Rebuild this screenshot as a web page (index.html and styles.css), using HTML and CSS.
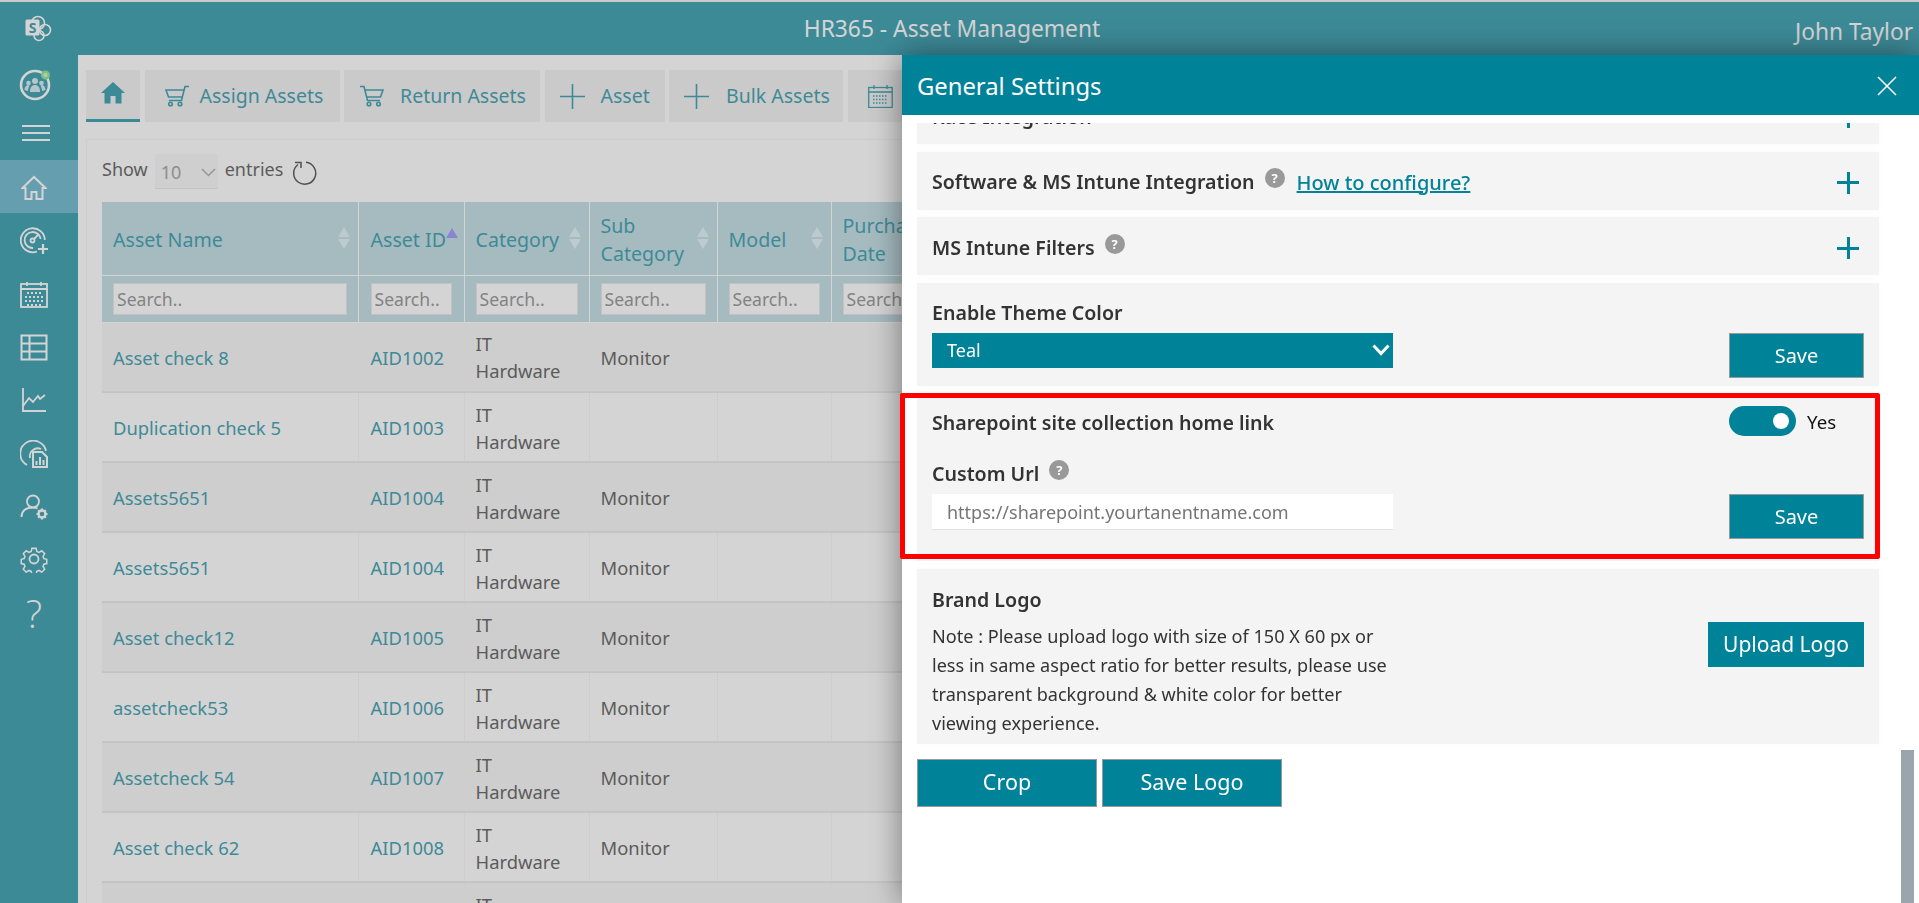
FILE: index.html
```html
<!DOCTYPE html>
<html lang="en">
<head>
  <meta charset="UTF-8" />
  <title>HR365 - Asset Management</title>
  <link rel="stylesheet" href="styles.css">
</head>
<body>
<div class="topline"></div>
<header class="topbar">
  <div class="brand">
    <svg width="28" height="28" viewBox="0 0 28 28" fill="none" stroke="#fff" stroke-width="1.6">
      <circle cx="13" cy="8" r="6.5"/>
      <circle cx="20" cy="15" r="5.5"/>
      <circle cx="14" cy="20.5" r="5"/>
      <rect x="0.5" y="4.5" width="14" height="16" rx="1.5" fill="#fff" stroke="none"/>
      <text x="7.5" y="17.5" class="brand-s">S</text>
    </svg>
  </div>
  <div class="app-title">HR365 - Asset Management</div>
  <div class="user-name">John Taylor</div>
</header>

<div class="layout">
  <aside class="sidebar">
    <div class="profile">
      <svg width="36" height="36" viewBox="0 0 36 36" fill="none">
        <circle cx="17" cy="19" r="14" stroke="#fff" stroke-width="2.6"/>
        <g fill="#fff" opacity="0.8">
          <circle cx="17" cy="15" r="3"/>
          <circle cx="10.5" cy="17" r="2.3"/>
          <circle cx="23.5" cy="17" r="2.3"/>
          <path d="M12 26c0-5 2-7 5-7s5 2 5 7z"/>
          <path d="M6.500 24c0-3 1.500-5 4-5l1 1c-1 1-1.500 3-1.500 5z"/>
          <path d="M27.500 24c0-3-1.500-5-4-5l-1 1c1 1 1.500 3 1.500 5z"/>
        </g>
        <circle cx="27.500" cy="9" r="3.300" fill="#c9f2c9" stroke="#6fdc6f" stroke-width="2.400"/>
      </svg>
    </div>
    <div class="hamburger"><i></i><i></i><i></i></div>
    <nav class="nav">
      <a class="nav-item active">
        <svg width="26" height="26" viewBox="0 0 26 26" fill="none" stroke="#fff" stroke-width="2">
          <path d="M1.500 13 13 2l11.500 11h-3v11h-6v-7h-5v7h-6V13z"/>
        </svg>
      </a>
      <a class="nav-item">
        <svg width="28" height="28" viewBox="0 0 28 28" fill="none" stroke="#fff" stroke-width="1.800">
          <path d="M17 24.500A12 12 0 1 1 24.800 13"/>
          <path d="M13 21A8 8 0 1 1 20.500 12"/>
          <circle cx="12.500" cy="13.500" r="2"/>
          <path d="M14 12l5-5"/>
          <path d="M23 17v10M18 22h10" stroke-width="2.200"/>
        </svg>
      </a>
      <a class="nav-item">
        <svg width="28" height="28" viewBox="0 0 28 28" fill="none" stroke="#fff" stroke-width="1.800">
          <rect x="1" y="3" width="26" height="23"/>
          <path d="M1 8h26M7 1v4M21 1v4"/>
          <path d="M7 12h14M5 16h18M5 20h18M7 24h14" stroke-width="2" stroke-dasharray="2 2"/>
        </svg>
      </a>
      <a class="nav-item">
        <svg width="28" height="28" viewBox="0 0 28 28" fill="none" stroke="#fff" stroke-width="2">
          <rect x="1.500" y="1.500" width="25" height="24"/>
          <path d="M1.500 9.500h25M1.500 17.500h25M9.500 1.500v24"/>
        </svg>
      </a>
      <a class="nav-item">
        <svg width="28" height="28" viewBox="0 0 28 28" fill="none" stroke="#fff" stroke-width="1.800">
          <path d="M3 1v23h23" />
          <path d="M3 19l6-8 4 4 5-6 2 3 5-4"/>
        </svg>
      </a>
      <a class="nav-item">
        <svg width="28" height="28" viewBox="0 0 28 28" fill="none" stroke="#fff" stroke-width="1.800">
          <path d="M7 25A13 13 0 1 1 26 11"/>
          <path d="M10 18A8 8 0 0 1 21 9"/>
          <path d="M13 12h9l5 5v10H13z" stroke-width="2"/>
          <path d="M16.500 25v-4M20 25v-8M23.500 25v-5" stroke-width="2"/>
        </svg>
      </a>
      <a class="nav-item">
        <svg width="30" height="28" viewBox="0 0 30 28" fill="none" stroke="#fff" stroke-width="1.800">
          <circle cx="14" cy="7.500" r="6"/>
          <path d="M2.500 23c0-6 4-9.500 11.500-9.500 2 0 3 .3 4.500 1"/>
          <circle cx="23" cy="20" r="3.500" stroke-width="2.400"/>
          <path d="M23 14.500v2.500M23 23v2.500M17.500 20H20M26 20h2.500M19.200 16.200l1.400 1.400M25.400 22.400l1.400 1.400M19.200 23.800l1.400-1.400M25.400 17.600l1.400-1.400" stroke-width="2.200"/>
        </svg>
      </a>
      <a class="nav-item">
        <svg width="28" height="28" viewBox="0 0 28 28" fill="none" stroke="#fff" stroke-width="1.800">
          <circle cx="14" cy="14" r="4.500"/>
          <path d="M11.500 1.500h5l.8 3.700 2.600 1.100 3.200-2 3.500 3.500-2 3.200 1.100 2.600 3.300.8v5l-3.300.8-1.100 2.600 2 3.200-3.500 3.500-3.200-2-2.600 1.100-.8 3.300h-5l-.8-3.300-2.600-1.100-3.200 2-3.500-3.500 2-3.200-1.100-2.600-3.300-.8v-5l3.300-.8 1.100-2.600-2-3.200 3.500-3.500 3.200 2 2.600-1.100z" transform="translate(2.100 2.100) scale(.85)"/>
        </svg>
      </a>
      <a class="nav-item"><span class="help-glyph">?</span></a>
    </nav>
  </aside>

  <main class="content">
    <div class="tabs">
      <a class="tab tab-home">
        <svg width="24" height="22" viewBox="0 0 24 22" fill="currentColor">
          <path d="M12 0 0 11h3.500v10.500h6V14h5v7.500h6V11H24z"/>
        </svg>
      </a>
      <a class="tab tab-assign">
        <svg class="flip" width="25" height="22" viewBox="0 0 25 22" fill="none" stroke="currentColor" stroke-width="1.600">
          <path d="M1 1.500h4l3.500 14h12.500M6 5h18l-2.500 7H8"/>
          <circle cx="10" cy="19" r="1.800"/><circle cx="19.500" cy="19" r="1.800"/>
        </svg>
        <span>Assign Assets</span>
      </a>
      <a class="tab tab-return">
        <svg width="25" height="22" viewBox="0 0 25 22" fill="none" stroke="currentColor" stroke-width="1.600">
          <path d="M1 1.500h4l3.500 14h12.500M6 5h18l-2.500 7H8"/>
          <circle cx="10" cy="19" r="1.800"/><circle cx="19.500" cy="19" r="1.800"/>
        </svg>
        <span>Return Assets</span>
      </a>
      <a class="tab tab-asset">
        <svg width="25" height="25" viewBox="0 0 25 25" stroke="currentColor" stroke-width="1.600"><path d="M12.500 0v25M0 12.500h25"/></svg>
        <span>Asset</span>
      </a>
      <a class="tab tab-bulk">
        <svg width="25" height="25" viewBox="0 0 25 25" stroke="currentColor" stroke-width="1.600"><path d="M12.500 0v25M0 12.500h25"/></svg>
        <span>Bulk Assets</span>
      </a>
      <a class="tab tab-cal">
        <svg width="25" height="23" viewBox="0 0 25 23" fill="none" stroke="currentColor" stroke-width="1.300">
          <rect x=".7" y="2.500" width="23.500" height="20"/>
          <path d="M.7 7h23.500M6 0v4M19 0v4"/>
          <path d="M5 11h15M5 14.500h15M5 18h15" stroke-width="1.600" stroke-dasharray="1.500 1.500"/>
        </svg>
      </a>
    </div>

    <section class="card">
      <div class="length-row">
        <span class="length-text">Show</span>
        <div class="length-select">
          <span>10</span>
          <svg width="15" height="9" viewBox="0 0 15 9" fill="none" stroke="#999" stroke-width="1.500"><path d="M1 1l6.500 6.500L14 1"/></svg>
        </div>
        <span class="length-text">entries</span>
        <svg class="refresh" width="26" height="26" viewBox="0 0 26 26" fill="none" stroke="#222" stroke-width="1.500">
          <path d="M7 4.500A11 11 0 1 0 15 2.300"/>
          <path d="M4 2.500h6V8"/>
        </svg>
      </div>

      <table class="assets">
        <colgroup>
          <col class="c-name"><col class="c-id"><col class="c-cat"><col class="c-sub"><col class="c-model"><col class="c-date">
        </colgroup>
        <thead>
          <tr class="head-row">
            <th><div class="th-in"><span>Asset Name</span><i class="sort"></i></div></th>
            <th class="th-id"><div class="th-in"><span>Asset ID</span><i class="sort-up"></i></div></th>
            <th><div class="th-in"><span>Category</span><i class="sort"></i></div></th>
            <th><div class="th-in"><span>Sub<br>Category</span><i class="sort"></i></div></th>
            <th><div class="th-in"><span>Model</span><i class="sort"></i></div></th>
            <th><div class="th-in"><span>Purchase<br>Date</span><i class="sort"></i></div></th>
          </tr>
          <tr class="filter-row">
            <th><input placeholder="Search.."></th>
            <th class="th-id"><input placeholder="Search.."></th>
            <th><input placeholder="Search.."></th>
            <th><input placeholder="Search.."></th>
            <th><input placeholder="Search.."></th>
            <th><input placeholder="Search.."></th>
          </tr>
        </thead>
        <tbody>
          <tr><td><a>Asset check 8</a></td><td class="td-id"><a>AID1002</a></td><td>IT<br>Hardware</td><td>Monitor</td><td></td><td></td></tr>
          <tr><td><a>Duplication check 5</a></td><td class="td-id"><a>AID1003</a></td><td>IT<br>Hardware</td><td></td><td></td><td></td></tr>
          <tr><td><a>Assets5651</a></td><td class="td-id"><a>AID1004</a></td><td>IT<br>Hardware</td><td>Monitor</td><td></td><td></td></tr>
          <tr><td><a>Assets5651</a></td><td class="td-id"><a>AID1004</a></td><td>IT<br>Hardware</td><td>Monitor</td><td></td><td></td></tr>
          <tr><td><a>Asset check12</a></td><td class="td-id"><a>AID1005</a></td><td>IT<br>Hardware</td><td>Monitor</td><td></td><td></td></tr>
          <tr><td><a>assetcheck53</a></td><td class="td-id"><a>AID1006</a></td><td>IT<br>Hardware</td><td>Monitor</td><td></td><td></td></tr>
          <tr><td><a>Assetcheck 54</a></td><td class="td-id"><a>AID1007</a></td><td>IT<br>Hardware</td><td>Monitor</td><td></td><td></td></tr>
          <tr><td><a>Asset check 62</a></td><td class="td-id"><a>AID1008</a></td><td>IT<br>Hardware</td><td>Monitor</td><td></td><td></td></tr>
          <tr><td></td><td></td><td>IT<br>Hardware</td><td></td><td></td><td></td></tr>
        </tbody>
      </table>
    </section>
  </main>
</div>

<div class="overlay"></div>

<aside class="panel">
  <div class="panel-head">
    <h2>General Settings</h2>
    <svg width="20" height="20" viewBox="0 0 20 20" stroke="#fff" stroke-width="1.600"><path d="M1 1l18 18M19 1L1 19"/></svg>
  </div>
  <div class="panel-body">
    <div class="panel-scroll">
      <div class="box box-row">
        <div class="box-title"><b>Kace Integration</b><i class="qmark">?</i></div>
        <span class="plus"></span>
      </div>
      <div class="box box-row">
        <div class="box-title"><b>Software &amp; MS Intune Integration</b><i class="qmark">?</i><a class="howto">How to configure?</a></div>
        <span class="plus"></span>
      </div>
      <div class="box box-row">
        <div class="box-title"><b>MS Intune Filters</b><i class="qmark">?</i></div>
        <span class="plus"></span>
      </div>
      <div class="box box-theme">
        <div class="field">
          <label>Enable Theme Color</label>
          <div class="theme-select">
            <span>Teal</span>
            <svg width="18" height="12" viewBox="0 0 18 12" fill="none" stroke="#fff" stroke-width="3"><path d="M1.500 1.500 9 9.500l7.500-8"/></svg>
          </div>
        </div>
        <button class="btn btn-save">Save</button>
      </div>
      <div class="box box-link">
        <div class="link-top">
          <label class="link-label">Sharepoint site collection home link</label>
          <div class="toggle-wrap"><span class="toggle"></span><span>Yes</span></div>
        </div>
        <div class="link-bottom">
          <div class="field">
            <label class="url-label">Custom Url<i class="qmark">?</i></label>
            <input class="url-input" placeholder="https://sharepoint.yourtanentname.com">
          </div>
          <button class="btn btn-save">Save</button>
        </div>
      </div>
      <div class="box box-logo">
        <div class="logo-text">
          <label>Brand Logo</label>
          <p>Note : Please upload logo with size of 150 X 60 px or<br>less in same aspect ratio for better results, please use<br>transparent background &amp; white color for better<br>viewing experience.</p>
        </div>
        <button class="btn btn-upload">Upload Logo</button>
      </div>
      <div class="logo-actions">
        <button class="btn btn-wide">Crop</button>
        <button class="btn btn-wide">Save Logo</button>
      </div>
    </div>
    <div class="scroll-thumb"></div>
  </div>
  <div class="callout"></div>
</aside>
</body>
</html>
```

FILE: styles.css
```css
/* Reset and base */
* {
  box-sizing: border-box;
}
html, body {
  height: 100%;
}
body {
  margin: 0;
  overflow: hidden;
  font-family: "Noto Sans", "Open Sans", sans-serif;
  font-size: 18px;
  background: #fff;
  color: #333;
}
a {
  color: #008299;
  text-decoration: none;
}
.overlay {
  position: fixed;
  inset: 0;
  background: rgba(150, 150, 150, 0.408);
}

/* Top bar */
.topline {
  height: 2px;
  background: #eee;
}
.topbar {
  display: grid;
  grid-template-columns: 1fr auto 1fr;
  align-items: center;
  height: 53px;
  padding-right: 6px;
  background: #008299;
  color: #fff;
}
.brand {
  display: flex;
  padding-left: 25px;
}
.brand-s {
  font-family: "Noto Sans", sans-serif;
  font-size: 14px;
  font-weight: 700;
  fill: #008299;
  stroke: none;
  text-anchor: middle;
}
.app-title {
  margin-right: 9px;
  font-size: 22.800px;
}
.user-name {
  justify-self: end;
  padding-top: 5px;
  font-size: 22.700px;
}

.layout {
  display: flex;
  height: calc(100% - 55px);
  overflow: hidden;
}

/* Sidebar */
.sidebar {
  flex: 0 0 78px;
  background: #008299;
}
.profile {
  display: flex;
  height: 60px;
  padding: 11px 0 0 18px;
}
.hamburger {
  display: flex;
  flex-direction: column;
  gap: 5px;
  height: 45px;
  padding: 10px 0 0 22px;
}
.hamburger i {
  display: block;
  width: 28px;
  height: 2px;
  background: #fff;
}
.nav-item {
  display: flex;
  align-items: center;
  justify-content: center;
  width: 68px;
  height: 53.250px;
  padding-top: 3px;
}
.nav-item:nth-last-child(-n+2) {
  padding-top: 0;
}
.nav-item.active {
  width: 78px;
  padding-right: 10px;
  background: #45a5bf;
}
.help-glyph {
  font-family: "Open Sans", sans-serif;
  font-size: 38px;
  font-weight: 300;
  color: #fff;
}

/* Main content */
.content {
  flex: 1;
  min-width: 0;
  padding: 15px 0 0 8px;
}
.tabs {
  display: flex;
  gap: 4.500px;
  height: 52px;
}
.tab {
  display: flex;
  align-items: center;
  background: #eee;
  font-size: 19.500px;
}
.tab span {
  padding-bottom: 2px;
}
.tab-home {
  justify-content: center;
  width: 54px;
  padding-bottom: 3px;
  border-bottom: 3px solid #008299;
}
.tab-assign {
  gap: 10px;
  width: 195px;
  padding-left: 20px;
}
.tab-return {
  gap: 16px;
  width: 196px;
  padding-left: 15px;
}
.tab-asset {
  gap: 16px;
  width: 120px;
  padding-left: 15px;
}
.tab-bulk {
  gap: 17px;
  width: 174px;
  padding-left: 15px;
}
.tab-cal {
  width: 130px;
  padding-left: 20px;
}
.flip {
  transform: scaleX(-1);
}

.card {
  margin-top: 17px;
  padding-left: 15px;
  border: 1px solid #f2f2f2;
  border-right: 0;
}
.length-row {
  display: flex;
  align-items: center;
  gap: 7px;
  height: 62px;
  color: #333;
}
.length-text {
  padding-bottom: 5px;
}
.length-select {
  display: flex;
  align-items: center;
  justify-content: space-between;
  width: 63px;
  height: 35px;
  padding: 3px 2px 0 6px;
  border-bottom: 1px solid #e4e4e4;
  background: #f6f6f6;
  color: #888;
}
.refresh {
  margin: 4px 0 0 1px;
}

/* Table */
.assets {
  width: 849px;
  border-collapse: collapse;
  table-layout: fixed;
  font-size: 18.400px;
}
.c-name { width: 256px; }
.c-id { width: 106px; }
.c-cat { width: 125px; }
.c-sub { width: 128px; }
.c-model { width: 114px; }
.c-date { width: 120px; }
.assets th {
  padding: 0 11px;
  border-right: 1px solid #fff;
  border-bottom: 1px solid #fff;
  background: #b0d5dd;
  color: #008299;
  font-size: 19.600px;
  font-weight: 400;
  text-align: left;
}
.assets th.th-id {
  padding: 0 12px;
}
.head-row {
  height: 73px;
}
.th-in {
  display: flex;
  align-items: center;
  justify-content: space-between;
  margin-right: -3px;
  line-height: 28px;
}
.th-in span {
  padding-top: 3px;
  white-space: nowrap;
}
.th-id .th-in {
  justify-content: flex-start;
}
.sort {
  display: flex;
  flex-direction: column;
  gap: 2px;
}
.sort::before, .sort::after {
  content: "";
  border-right: 6px solid transparent;
  border-left: 6px solid transparent;
}
.sort::before {
  border-bottom: 10px solid #d8eef5;
}
.sort::after {
  border-top: 10px solid #d8eef5;
}
.sort-up {
  margin: -11px 0 0 0;
  border-right: 6px solid transparent;
  border-bottom: 10px solid #827af8;
  border-left: 6px solid transparent;
}
.filter-row {
  height: 47px;
}
.filter-row input {
  width: 100%;
  height: 32px;
  padding: 0 3px;
  border: 1px solid #e0e0e0;
  background: #fff;
  font: 17.600px "Noto Sans", sans-serif;
}
input::placeholder {
  color: #757575;
}
.assets td {
  height: 70px;
  padding: 1px 11px 0;
  border-right: 1px solid #f3f3f3;
  border-bottom: 2px solid #e4e4e4;
  line-height: 27px;
}
.assets td.td-id {
  padding: 1px 12px 0;
}
.assets tbody tr:nth-child(odd) td {
  background: #f5f5f5;
}

/* General settings panel */
.panel {
  position: fixed;
  top: 55px;
  right: 0;
  bottom: 0;
  display: flex;
  flex-direction: column;
  width: 1017px;
  background: #fff;
  box-shadow: 0 0 30px rgba(0, 0, 0, 0.45);
}
.panel-head {
  display: flex;
  align-items: center;
  justify-content: space-between;
  flex: 0 0 60px;
  padding: 2px 22px 0 15px;
  background: #008299;
  color: #fff;
}
.panel-head h2 {
  margin: 0;
  font-size: 23.800px;
  font-weight: 400;
}
.panel-body {
  position: relative;
  flex: 1;
  margin-top: 8px;
  overflow: hidden;
}
.panel-scroll {
  display: flex;
  flex-direction: column;
  gap: 7.600px;
  width: 962px;
  margin: -37px 0 0 15px;
}
.scroll-thumb {
  position: absolute;
  top: 627px;
  right: 5px;
  bottom: 0;
  width: 13px;
  background: #9aa5ad;
}
.box {
  padding: 0 15px;
  background: #f4f4f4;
  box-shadow: 0 0 10px rgba(0, 0, 0, 0.02);
  color: #333;
}
.box label, .box-title b {
  display: block;
  font-size: 19.600px;
  font-weight: 600;
  line-height: 24px;
}
.box-row {
  display: flex;
  align-items: center;
  justify-content: space-between;
  height: 58px;
}
.box-title {
  display: flex;
  align-items: center;
  padding-top: 3px;
}
.qmark {
  display: inline-flex;
  align-items: center;
  justify-content: center;
  width: 20px;
  height: 20px;
  margin: -8px 0 0 10px;
  border-radius: 50%;
  background: #999;
  color: #fff;
  font-size: 13px;
  font-style: normal;
  font-weight: 700;
}
.howto {
  margin-left: 12px;
  color: #008299;
  font-size: 20px;
  font-weight: 500;
  text-decoration: underline;
}
.plus {
  width: 22px;
  height: 22px;
  margin: 4px 5px 0 0;
  background: linear-gradient(#008299, #008299) center / 100% 3px no-repeat,
    linear-gradient(#008299, #008299) center / 3px 100% no-repeat;
}
.box-theme {
  display: flex;
  align-items: flex-start;
  justify-content: space-between;
  height: 103px;
  padding-top: 18px;
}
.field {
  display: flex;
  flex-direction: column;
  width: 461px;
}
.theme-select {
  display: flex;
  align-items: center;
  justify-content: space-between;
  height: 35px;
  margin-top: 8px;
  padding: 0 3px 0 15px;
  background: #008299;
  color: #fff;
}
.btn {
  border: 1px solid #999;
  background: #008299;
  color: #fff;
  font-family: "Noto Sans", sans-serif;
  font-size: 20px;
}
.btn-save {
  width: 135px;
  height: 45px;
}
.box-theme .btn-save {
  margin-top: 32px;
}
.box-link {
  height: 168px;
  padding-top: 13px;
}
.link-top {
  display: flex;
  align-items: center;
  justify-content: space-between;
  height: 30px;
}
.box .link-label {
  padding-top: 4px;
}
.toggle-wrap {
  display: flex;
  align-items: center;
  gap: 11px;
  width: 135px;
  color: #111;
  font-size: 18.700px;
}
.toggle {
  position: relative;
  width: 67px;
  height: 30px;
  border-radius: 15px;
  background: #008299;
}
.toggle::after {
  content: "";
  position: absolute;
  top: 7px;
  right: 7px;
  width: 16px;
  height: 16px;
  border-radius: 50%;
  background: #fff;
}
.link-bottom {
  display: flex;
  align-items: flex-end;
  justify-content: space-between;
  margin-top: 24px;
}
.box .url-label {
  display: flex;
  align-items: center;
  height: 28px;
  margin-bottom: 6px;
}
.url-input {
  height: 36px;
  margin-bottom: 9px;
  padding: 0 15px;
  border: 0;
  border-bottom: 1px solid #e2e2e2;
  background: #fff;
  font: 18px "Noto Sans", sans-serif;
}
.box-logo {
  display: flex;
  align-items: flex-start;
  justify-content: space-between;
  height: 175px;
  padding-top: 19px;
}
.logo-text p {
  margin: 10px 0 0;
  font-size: 18.100px;
  line-height: 29px;
}
.btn-upload {
  width: 156px;
  height: 45px;
  margin-top: 34px;
  border: 0;
  font-size: 21px;
}
.logo-actions {
  display: flex;
  gap: 5px;
  margin-top: 7px;
}
.btn-wide {
  width: 180px;
  height: 48px;
  padding-bottom: 4px;
  font-size: 21.500px;
}

/* Red annotation frame */
.callout {
  position: absolute;
  top: 338px;
  left: -2px;
  width: 980px;
  height: 166px;
  border: 5px solid #f00;
  border-radius: 2px;
}
```
